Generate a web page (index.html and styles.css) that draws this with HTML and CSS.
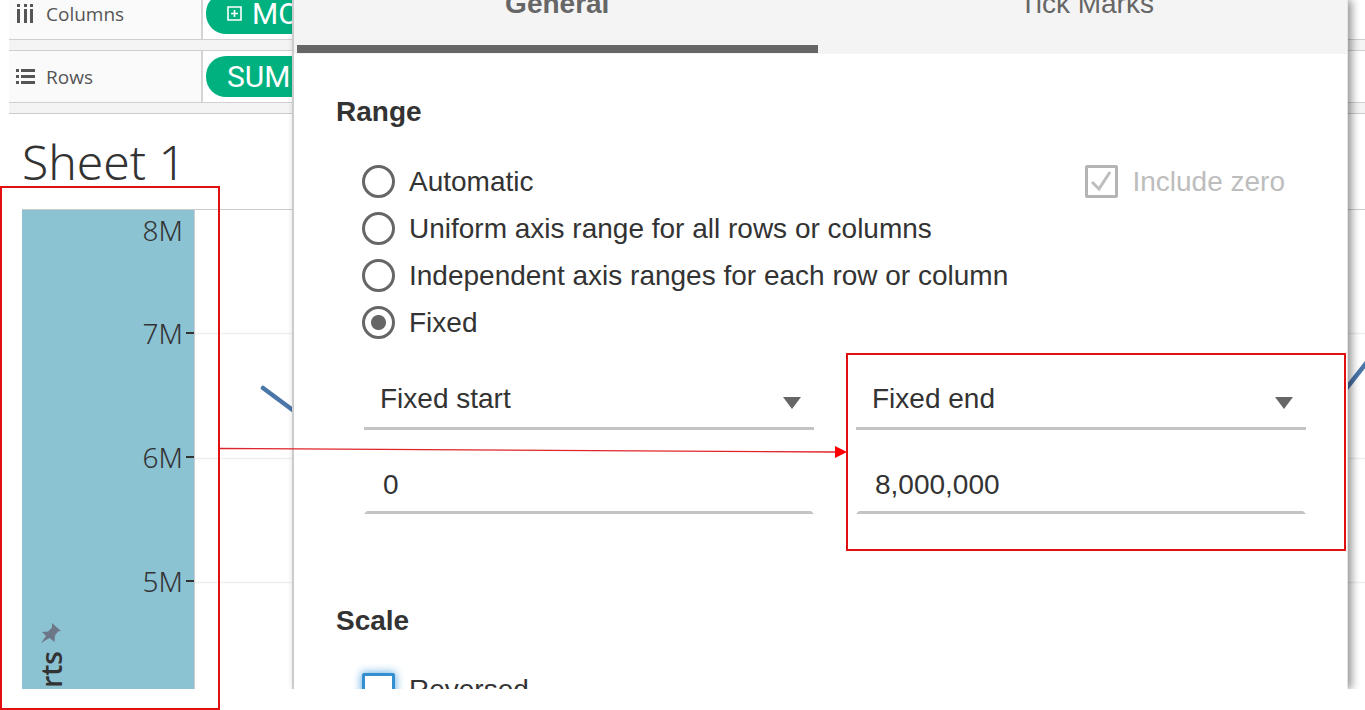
FILE: index.html
```html
<!DOCTYPE html>
<html lang="en">
<head>
<meta charset="utf-8">
<title>Edit Axis</title>
<link rel="stylesheet" href="styles.css">
</head>
<body>
<main class="workspace">
  <section class="shelves">
    <div class="shelf">
      <div class="shelf-label">
        <svg width="20" height="20" viewBox="0 0 20 20" fill="#555"><path d="M1 0h3v3H1zM8 0h3v3H8zM14 0h3v3h-3zM1 5h3v14H1zM8 5h3v14H8zM14 5h3v14h-3z"/></svg>
        <span>Columns</span>
      </div>
      <div class="shelf-pills">
        <div class="pill">
          <svg width="15" height="15" viewBox="0 0 15 15" fill="none" stroke="#fff" stroke-width="1.6"><path d="M1 1h13v13H1zM4 7.500h7M7.500 4v7"/></svg>
          <span>MO</span>
        </div>
      </div>
    </div>
    <div class="shelf">
      <div class="shelf-label">
        <svg width="20" height="20" viewBox="0 0 20 20" fill="#555"><path d="M0 2h3v3H0zM0 8h3v3H0zM0 14h3v3H0zM5 2h14v3H5zM5 8h14v3H5zM5 14h14v3H5z"/></svg>
        <span>Rows</span>
      </div>
      <div class="shelf-pills">
        <div class="pill"><span>SUM</span></div>
      </div>
    </div>
  </section>

  <section class="sheet">
    <h1 class="sheet-title">Sheet 1</h1>
    <div class="chart">
      <div class="axis">
        <div class="axis-title">
          <svg width="20" height="20" viewBox="0 0 20 20" fill="#6d7787"><path d="M11 0l9 8-3 .5-3 4-.5 6.500-5-4L0 20l5-7-4-4 6-.5 4-4z"/></svg>
          <span>rts</span>
        </div>
        <ol class="ticks">
          <li class="tick-end">8M</li>
          <li>7M</li>
          <li>6M</li>
          <li>5M</li>
        </ol>
      </div>
      <svg class="plot">
        <path d="M0 123.500H1200M0 248.500H1200M0 372.500H1200" stroke="#efefef" stroke-width="1.500"/>
        <polyline points="68,178 130,224 600,400 1060,290 1154,175 1180,142" fill="none" stroke="#4a76a8" stroke-width="4.500" stroke-linecap="round" stroke-linejoin="round"/>
      </svg>
    </div>
  </section>

  <form class="dialog">
    <div class="tabs">
      <button type="button" class="tab tab-active">General</button>
      <button type="button" class="tab">Tick Marks</button>
    </div>
    <div class="dialog-body">
      <h2>Range</h2>
      <div class="range">
        <div class="options">
          <label class="option"><input type="radio" name="range"><span>Automatic</span></label>
          <label class="option"><input type="radio" name="range"><span>Uniform axis range for all rows or columns</span></label>
          <label class="option"><input type="radio" name="range"><span>Independent axis ranges for each row or column</span></label>
          <label class="option"><input type="radio" name="range" checked><span>Fixed</span></label>
        </div>
        <label class="option option-disabled">
          <span class="check">
            <input type="checkbox" checked disabled>
            <svg width="21" height="21" viewBox="0 0 21 21" fill="none" stroke="#bdbdbd" stroke-width="3"><path d="M1 11l7 7L19 1"/></svg>
          </span>
          <span>Include zero</span>
        </label>
      </div>
      <div class="fields">
        <div class="field">
          <div class="select">
            <select aria-label="Start of range"><option>Fixed start</option></select>
            <svg width="18" height="12" viewBox="0 0 18 12" fill="#666"><path d="M0 0h18L9 12z"/></svg>
          </div>
          <input type="text" aria-label="Fixed start value" value="0">
        </div>
        <div class="field">
          <div class="select">
            <select aria-label="End of range"><option>Fixed end</option></select>
            <svg width="18" height="12" viewBox="0 0 18 12" fill="#666"><path d="M0 0h18L9 12z"/></svg>
          </div>
          <input type="text" aria-label="Fixed end value" value="8,000,000">
        </div>
      </div>
      <h2>Scale</h2>
      <div class="options options-scale">
        <label class="option"><input type="checkbox" class="focused"><span>Reversed</span></label>
      </div>
    </div>
  </form>
</main>

<div class="callout callout-axis"></div>
<div class="callout callout-end"></div>
<svg class="arrow" width="628" height="16" viewBox="0 0 628 16"><path d="M0 4.500L616 8" stroke="#e0242a" stroke-width="1.300"/><path d="M615 2v12l12-6z" fill="#f00"/></svg>
</body>
</html>
```
FILE: styles.css
```css
* {
  box-sizing: border-box;
}

body {
  margin: 0;
  position: relative;
  height: 100vh;
  overflow: hidden;
  padding: 0 0 21px 9px;
  background: #fff;
  color: #333;
  font-family: "Liberation Sans", Arial, sans-serif;
}

.workspace {
  position: relative;
  height: 100%;
  overflow: hidden;
  display: flex;
  flex-direction: column;
}

/* Shelves */
.shelves {
  margin-top: -13px;
  display: flex;
  flex-direction: column;
  gap: 10px;
  padding-bottom: 10px;
  background: #f4f4f4;
  border-bottom: 1px solid #ccc;
}

.shelf {
  display: flex;
  height: 53px;
  border: solid #d0d0d0;
  border-width: 1px 0;
  background: #fff;
}

.shelf-label {
  width: 194px;
  display: flex;
  align-items: center;
  gap: 10px;
  padding-left: 7px;
  background: #fafafa;
  border-right: 2px solid #d4d4d4;
  color: #555;
  font: 19px/24px "Open Sans", sans-serif;
}

.shelf-pills {
  flex: 1;
  display: flex;
  align-items: center;
  padding-left: 3px;
}

.pill {
  width: 300px;
  height: 41px;
  display: flex;
  align-items: center;
  gap: 10px;
  padding-left: 21px;
  border-radius: 20px;
  background: #00b180;
  color: #fff;
  font: 30px Roboto, sans-serif;
}

/* Sheet and chart */
.sheet {
  flex: 1;
  display: flex;
  flex-direction: column;
  padding-left: 13px;
}

.sheet-title {
  margin: 16px 0 15px;
  font: 300 48px/64px "Noto Sans", sans-serif;
}

.chart {
  flex: 1;
  display: flex;
  border-top: 1px solid #ccc;
}

.axis {
  width: 173px;
  display: flex;
  justify-content: space-between;
  background: #8cc3d3;
  border-right: 1px solid #ccc;
}

.axis-title {
  display: flex;
  flex-direction: column;
  align-items: center;
  padding: 413px 0 0 11px;
  font: 600 28px/36px "Open Sans", sans-serif;
}

.axis-title span {
  margin-top: 8px;
  writing-mode: vertical-rl;
  transform: rotate(180deg);
}

.ticks {
  margin: 0;
  padding: 0;
  list-style: none;
  text-align: right;
  font: 300 28px/40px "Noto Sans", sans-serif;
}

.ticks li {
  display: flex;
  align-items: center;
  justify-content: flex-end;
  gap: 3px;
  margin-bottom: 84px;
}

.ticks li::after {
  content: "";
  width: 8px;
  height: 2px;
  background: #333;
}

.ticks .tick-end {
  margin-bottom: 63px;
}

.ticks .tick-end::after {
  background: none;
}

.plot {
  flex: 1;
  height: 100%;
}

/* Edit axis dialog */
.dialog {
  position: absolute;
  top: 0;
  bottom: 0;
  left: 283px;
  right: 17px;
  background: #fff;
  border-left: 2px solid #ccc;
  border-right: 1px solid #e4e4e4;
  box-shadow: 4px 0 8px rgba(0, 0, 0, 0.4);
  font-size: 28px;
  line-height: 36px;
}

.tabs {
  display: flex;
  gap: 9px;
  margin-top: -14px;
  padding: 0 0 1px 3px;
  background: #f4f4f4;
}

.tab {
  flex: 1;
  padding: 0 0 23px;
  border: 0;
  border-bottom: 8px solid transparent;
  background: none;
  color: #666;
  font: inherit;
}

.tab-active {
  border-color: #666;
  font-weight: bold;
}

.dialog-body {
  padding: 40px 41px 0 42px;
}

h2 {
  margin: 0;
  font-size: 28px;
  line-height: 36px;
}

.range {
  display: flex;
  justify-content: space-between;
  align-items: flex-start;
  margin: 28px 21px 26px 26px;
}

.option {
  display: flex;
  align-items: center;
  gap: 14px;
  height: 47px;
}

.option input {
  flex: none;
  appearance: none;
  width: 33px;
  height: 33px;
  margin: 0;
  border: 3px solid #666;
  background: #fff;
}

.option input[type="radio"] {
  border-radius: 50%;
}

.option input[type="radio"]:checked {
  background: radial-gradient(circle, #666 7px, #fff 8px);
}

.option input[type="checkbox"] {
  border-radius: 2px;
}

.option .focused {
  border-color: #348fd0;
  box-shadow: 0 0 8px 1px #6fb3e4;
}

.option-disabled {
  color: #bdbdbd;
}

.check {
  display: grid;
  place-items: center;
}

.check > * {
  grid-area: 1 / 1;
}

.check svg {
  z-index: 1;
}

.check input[type="checkbox"] {
  border-color: #b4b4b4;
}

.fields {
  display: grid;
  grid-template-columns: 1fr 1fr;
  gap: 42px;
  margin: 0 0 89px 28px;
}

.field {
  display: flex;
  flex-direction: column;
  gap: 26px;
}

.select {
  display: grid;
  align-items: center;
}

.select > * {
  grid-area: 1 / 1;
}

.select svg {
  justify-self: end;
  margin: 4px 13px 0 0;
  pointer-events: none;
}

.field select,
.field input {
  appearance: none;
  width: 100%;
  height: 58px;
  margin: 0;
  border: 0;
  border-radius: 0;
  background: none;
  color: inherit;
  font: inherit;
}

.field select {
  padding: 0 40px 2px 16px;
  border-bottom: 3px solid #c4c4c4;
}

.field input {
  padding: 2px 16px 0;
  border: 3px solid transparent;
  border-top: 0;
  border-bottom-color: #c4c4c4;
}

.options-scale {
  margin: 27px 0 0 26px;
}

/* Callouts drawn over the page */
.callout {
  position: absolute;
  border: 2px solid #e01010;
}

.callout-axis {
  top: 186px;
  bottom: 0;
  left: 0;
  width: 220px;
}

.callout-end {
  top: 353px;
  left: 846px;
  right: 19px;
  height: 198px;
}

.arrow {
  position: absolute;
  top: 444px;
  left: 220px;
}
```
